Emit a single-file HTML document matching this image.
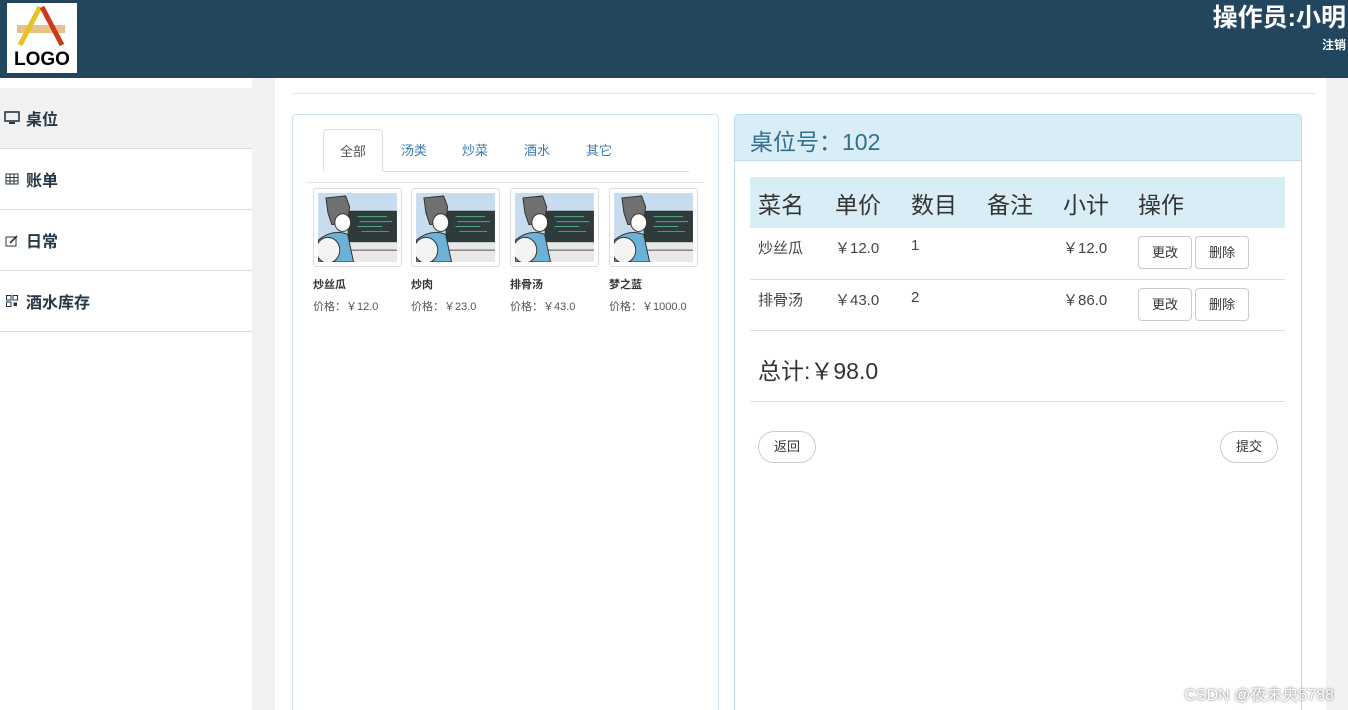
<!DOCTYPE html>
<html><head><meta charset="utf-8"><style>
*{box-sizing:border-box;margin:0;padding:0}
html,body{width:1348px;height:710px;overflow:hidden}
body{background:#f2f2f2;font-family:"Liberation Sans","Noto Sans CJK SC",sans-serif;color:#333;position:relative}
.hdr{position:absolute;left:0;top:0;width:1348px;height:78px;background:#23465f}
.logo{position:absolute;left:7px;top:3px;width:70px;height:70px;background:#fff}
.op{position:absolute;right:2px;top:-2px;color:#fff;font-weight:bold;font-size:25px}
.out{position:absolute;right:2px;top:36px;color:#fff;font-weight:bold;font-size:12px}
.sidebg{position:absolute;left:0;top:78px;width:252px;height:632px;background:#fff}
.side{position:absolute;left:0;top:88px;width:252px}
.si{height:61px;border-bottom:1px solid #ddd;background:#fff;display:flex;align-items:center;font-size:16px;color:#253746;font-weight:bold}
.si.a{background:#f2f2f2}
.si i{display:inline-flex;width:24px;justify-content:center;margin-right:2px}
.main{position:absolute;left:275px;top:78px;width:1051px;height:632px;background:#fff;overflow:hidden}
.hr{position:absolute;left:18px;right:10px;top:15px;border-top:1px solid #e5e5e5}
.lp{position:absolute;left:17px;top:36px;width:427px;height:596px;border:1px solid #cfe0ea;border-bottom:none;border-radius:4px 4px 0 0}
.tabs{position:absolute;left:30px;top:14px;width:366px;height:43px;border-bottom:1px solid #ddd}
.tab{position:absolute;top:0;height:43px;line-height:43px;font-size:13px;color:#3a7ab0}
.tab.a{left:0;width:60px;border:1px solid #ddd;border-bottom-color:#fff;border-radius:4px 4px 0 0;background:#fff;color:#555;text-align:center}
.tline{position:absolute;left:14px;right:14px;top:67px;border-top:1px solid #e5e5e5}
.it{position:absolute;top:73px;width:89px}
.th{width:89px;height:79px;border:1px solid #ddd;border-radius:3px;padding:4px;background:#fff}
.nm{font-size:11px;font-weight:bold;margin-top:9px;color:#333}
.pr{font-size:11px;color:#555;margin-top:6px}
.rp{position:absolute;left:459px;top:36px;width:568px;height:596px;border:1px solid #bcdced;border-bottom:none;border-radius:4px 4px 0 0}
.rh{height:46px;background:#d9edf7;border-bottom:1px solid #bcdced;font-size:23px;color:#31708f;padding:8px 0 0 15px}
table{position:absolute;left:15px;top:62px;width:535px;border-collapse:collapse}
td,th{text-align:left;font-weight:normal}
thead th{background:#d9edf7;height:51px;font-size:23px;padding-left:8px;color:#333}
tbody td{height:51px;border-bottom:1px solid #ddd;font-size:15px;padding-left:8px;vertical-align:top;padding-top:9px;color:#444}
.b{display:inline-block;border:1px solid #ccc;border-radius:4px;font-size:13px;width:54px;height:33px;line-height:31px;text-align:center;background:#fff;color:#333;margin-right:3px}
.tot{position:absolute;left:15px;top:228px;width:535px;height:59px;border-bottom:1px solid #ddd;font-size:23px;padding:9px 0 0 8px}
.rb{position:absolute;top:316px;border:1px solid #ccc;border-radius:16px;font-size:13px;width:58px;height:32px;line-height:30px;text-align:center;background:#fff}
.wm{position:absolute;right:14px;top:681px;font-size:16px;color:#fff;text-shadow:0 0 2px #555}
</style></head><body>
<svg width="0" height="0" style="position:absolute"><defs><symbol id="pic" viewBox="0 0 80 70">
<rect width="80" height="70" fill="#c8dcef"/><rect x="30" y="18" width="50" height="32" fill="#2f3a3a"/>
<g stroke="#4fa88a" stroke-width="1"><line x1="40" y1="24" x2="70" y2="24"/><line x1="42" y1="29" x2="75" y2="29"/><line x1="40" y1="34" x2="65" y2="34"/><line x1="44" y1="39" x2="72" y2="39"/></g>
<rect x="30" y="50" width="50" height="20" fill="#e8e8e8"/><line x1="30" y1="58" x2="80" y2="58" stroke="#555"/>
<path d="M8 5 L28 3 L32 14 L30 30 L14 32 L10 20Z" fill="#707070" stroke="#333"/>
<ellipse cx="25" cy="30" rx="8" ry="9" fill="#fff" stroke="#333"/>
<path d="M0 48 Q15 36 30 42 L36 70 L0 70Z" fill="#6cb2d6" stroke="#333"/>
<ellipse cx="10" cy="58" rx="12" ry="13" fill="#f4f4f4" stroke="#333"/>
</symbol></defs></svg>
<div class="hdr">
<div class="logo"><svg width="70" height="70" viewBox="0 0 70 70"><rect x="10" y="22" width="48" height="8" fill="#e8c08a"/><path d="M33 4 L13 42" stroke="#e8c020" stroke-width="5"/><path d="M35 4 L55 42" stroke="#c83a1a" stroke-width="5"/><text x="35" y="62" text-anchor="middle" font-family="Liberation Sans" font-weight="bold" font-size="19" fill="#000">LOGO</text></svg></div>
<div class="op">操作员:小明</div><div class="out">注销</div>
</div>
<div class="sidebg"></div>
<div class="side">
<div class="si a"><i><svg width="16" height="14"><rect x="1" y="1" width="14" height="9" fill="none" stroke="#253746" stroke-width="1.6"/><rect x="5" y="11" width="6" height="2" fill="#253746"/></svg></i>桌位</div>
<div class="si"><i><svg width="14" height="12"><rect x="1" y="1" width="12" height="10" fill="none" stroke="#253746"/><path d="M1 4.5H13M1 8H13M5 1V11M9 1V11" stroke="#253746"/></svg></i>账单</div>
<div class="si"><i><svg width="14" height="13"><rect x="1" y="3" width="10" height="9" fill="none" stroke="#253746"/><path d="M5 9L12 2" stroke="#253746" stroke-width="1.6"/></svg></i>日常</div>
<div class="si"><i><svg width="12" height="12"><rect x="0.5" y="0.5" width="4.5" height="4.5" fill="none" stroke="#253746"/><rect x="7" y="0.5" width="4.5" height="4.5" fill="none" stroke="#253746"/><rect x="0.5" y="7" width="4.5" height="4.5" fill="none" stroke="#253746"/><rect x="7.5" y="7.5" width="3.5" height="3.5" fill="#253746"/></svg></i>酒水库存</div>
</div>
<div class="main">
<div class="hr"></div>
<div class="lp">
<div class="tabs"><div class="tab a">全部</div><div class="tab" style="left:78px">汤类</div><div class="tab" style="left:139px">炒菜</div><div class="tab" style="left:201px">酒水</div><div class="tab" style="left:263px">其它</div></div>
<div class="tline"></div>
<div class="it" style="left:20px"><div class="th"><svg width="79" height="69"><use href="#pic"/></svg></div><div class="nm">炒丝瓜</div><div class="pr">价格：￥12.0</div></div>
<div class="it" style="left:118px"><div class="th"><svg width="79" height="69"><use href="#pic"/></svg></div><div class="nm">炒肉</div><div class="pr">价格：￥23.0</div></div>
<div class="it" style="left:217px"><div class="th"><svg width="79" height="69"><use href="#pic"/></svg></div><div class="nm">排骨汤</div><div class="pr">价格：￥43.0</div></div>
<div class="it" style="left:316px"><div class="th"><svg width="79" height="69"><use href="#pic"/></svg></div><div class="nm">梦之蓝</div><div class="pr">价格：￥1000.0</div></div>
</div>
<div class="rp">
<div class="rh">桌位号：102</div>
<table><thead><tr><th style="width:77px">菜名</th><th style="width:76px">单价</th><th style="width:76px">数目</th><th style="width:76px">备注</th><th style="width:75px">小计</th><th>操作</th></tr></thead>
<tbody><tr><td>炒丝瓜</td><td>￥12.0</td><td>1</td><td></td><td>￥12.0</td><td style="padding-top:8px"><span class="b">更改</span><span class="b">删除</span></td></tr>
<tr><td>排骨汤</td><td>￥43.0</td><td>2</td><td></td><td>￥86.0</td><td style="padding-top:8px"><span class="b">更改</span><span class="b">删除</span></td></tr></tbody></table>
<div class="tot">总计:￥98.0</div>
<div class="rb" style="left:23px">返回</div>
<div class="rb" style="right:23px">提交</div>
</div>
</div>
<div class="wm">CSDN @夜未央5788</div>
</body></html>
